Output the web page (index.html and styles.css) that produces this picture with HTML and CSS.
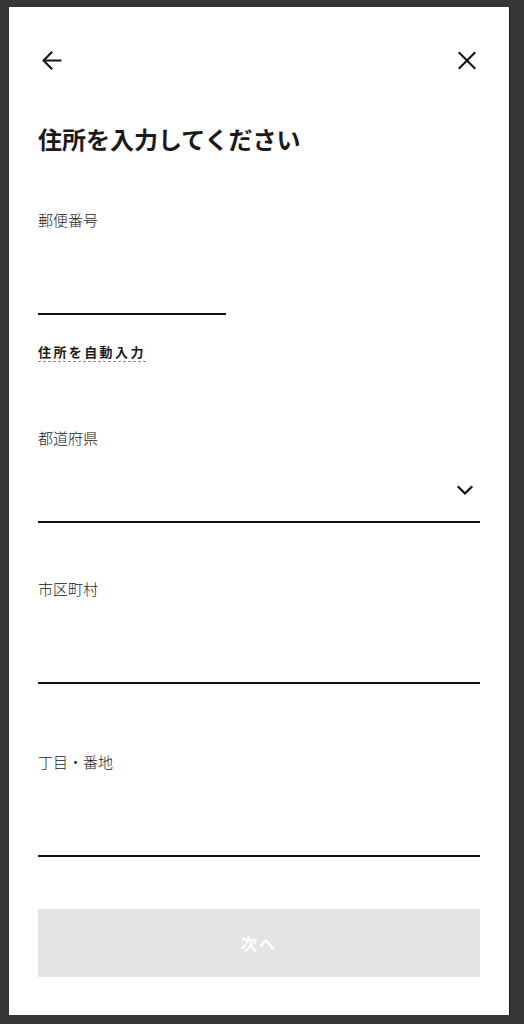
FILE: index.html
```html
<!DOCTYPE html>
<html lang="ja">
<head>
<meta charset="utf-8">
<title>住所を入力してください</title>
<link rel="stylesheet" href="styles.css">
</head>
<body>
<div class="modal">
  <div class="header">
    <button class="icon-btn" aria-label="戻る">
      <svg width="24" height="24" viewBox="0 0 24 24" fill="none" stroke="#111" stroke-width="2" stroke-linecap="square" stroke-linejoin="miter">
        <path d="M6 12.5 H22.5"/>
        <path d="M13.5 4.5 L5.5 12.5 L13.5 20.5"/>
      </svg>
    </button>
    <button class="icon-btn" aria-label="閉じる">
      <svg width="24" height="24" viewBox="0 0 24 24" fill="none" stroke="#111" stroke-width="2" stroke-linecap="square">
        <path d="M3.5 5 L18.5 20"/>
        <path d="M18.5 5 L3.5 20"/>
      </svg>
    </button>
  </div>

  <h1 class="title">住所を入力してください</h1>

  <div class="field field-postal">
    <div class="label">郵便番号</div>
    <div class="input input-short"></div>
  </div>
  <div class="auto-row"><span class="auto-link">住所を自動入力</span></div>

  <div class="field field-pref">
    <div class="label">都道府県</div>
    <div class="input select">
      <svg class="chev" width="18" height="11" viewBox="0 0 18 11" fill="none" stroke="#111" stroke-width="2.2" stroke-linecap="square">
        <path d="M2.5 2 L9 8.5 L15.5 2"/>
      </svg>
    </div>
  </div>

  <div class="field field-city">
    <div class="label">市区町村</div>
    <div class="input"></div>
  </div>

  <div class="field field-street">
    <div class="label">丁目・番地</div>
    <div class="input"></div>
  </div>

  <button class="next-btn">次へ</button>
</div>
</body>
</html>
```

FILE: styles.css
```css
* { box-sizing: border-box; }
html, body { margin: 0; padding: 0; }
body {
  background: #363636;
  height: 1024px;
  overflow: hidden;
  font-family: "Noto Sans CJK JP", "Noto Sans", sans-serif;
  color: #1a1a1a;
}
.modal {
  margin: 7px 15px 0 9px;
  width: 500px;
  height: 1008px;
  background: #fff;
  padding: 0 29px;
  box-shadow: 1px 0 0 #1c1c1c;
}
.header {
  display: flex;
  justify-content: space-between;
  align-items: center;
  padding-top: 41px;
  height: 65px;
}
.icon-btn {
  background: none;
  border: 0;
  padding: 0;
  width: 24px;
  height: 24px;
  display: block;
}
.icon-btn svg { display: block; }
.title {
  margin: 50px 0 0;
  font-size: 24px;
  font-weight: 700;
  line-height: 34px;
  letter-spacing: 0;
  color: #1a1a1a;
}
.label {
  font-size: 15px;
  font-weight: 300;
  line-height: 22px;
  color: #222;
  letter-spacing: 0;
}
.input {
  height: 84px;
  border-bottom: 2px solid #111;
}
.input-short { width: 188px; }
.field-postal { margin-top: 53px; }
.auto-row { margin-top: 27px; line-height: 0; }
.auto-link {
  display: inline-block;
  font-size: 13px;
  font-weight: 700;
  line-height: 19px;
  letter-spacing: 2.4px;
  color: #1a1a1a;
  border-bottom: 1px dashed #8a8a8a;
}
.field-pref { margin-top: 65px; }
.select {
  height: 74px;
  display: flex;
  justify-content: flex-end;
  align-items: flex-end;
  padding: 0 6px 25px 0;
}
.chev { display: block; }
.field-city { margin-top: 55px; }
.field-street { margin-top: 67px; }
.next-btn {
  display: block;
  margin-top: 52px;
  width: 442px;
  height: 68px;
  border: 0;
  background: #e4e4e4;
  color: #fff;
  font-family: "Noto Sans CJK JP", "Noto Sans", sans-serif;
  font-size: 16px;
  font-weight: 700;
  letter-spacing: 2px;
  padding: 0;
}
```
